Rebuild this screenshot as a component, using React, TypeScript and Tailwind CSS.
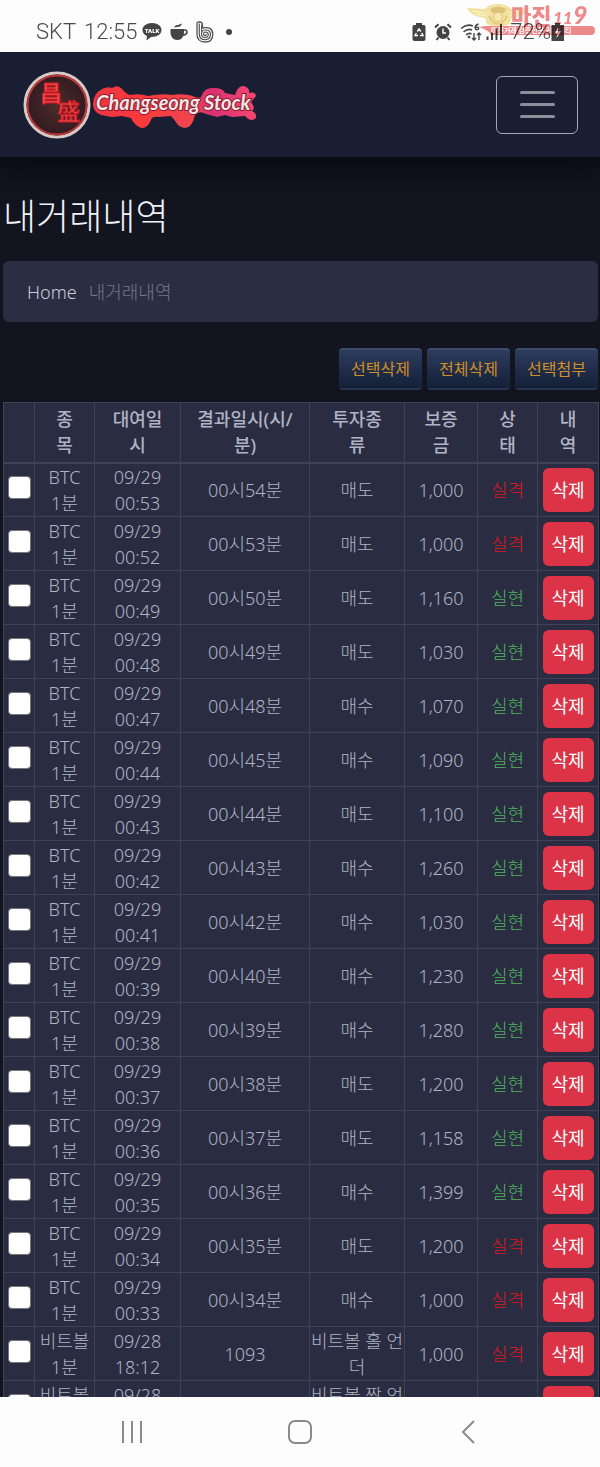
import React, { useState } from 'react';

type Trade = {
  item: string;
  date: string;
  time: string;
  result: string;
  kind: string;
  deposit: string;
  won: boolean;
};

const btc = (time: string, result: string, kind: string, deposit: string, won = true): Trade => ({
  item: 'BTC',
  date: '09/29',
  time,
  result,
  kind,
  deposit,
  won,
});

const trades: Trade[] = [
  btc('00:53', '00시54분', '매도', '1,000', false),
  btc('00:52', '00시53분', '매도', '1,000', false),
  btc('00:49', '00시50분', '매도', '1,160'),
  btc('00:48', '00시49분', '매도', '1,030'),
  btc('00:47', '00시48분', '매수', '1,070'),
  btc('00:44', '00시45분', '매수', '1,090'),
  btc('00:43', '00시44분', '매도', '1,100'),
  btc('00:42', '00시43분', '매수', '1,260'),
  btc('00:41', '00시42분', '매수', '1,030'),
  btc('00:39', '00시40분', '매수', '1,230'),
  btc('00:38', '00시39분', '매수', '1,280'),
  btc('00:37', '00시38분', '매도', '1,200'),
  btc('00:36', '00시37분', '매도', '1,158'),
  btc('00:35', '00시36분', '매수', '1,399'),
  btc('00:34', '00시35분', '매도', '1,200', false),
  btc('00:33', '00시34분', '매수', '1,000', false),
  { item: '비트볼', date: '09/28', time: '18:12', result: '1093', kind: '비트볼 홀 언더', deposit: '1,000', won: false },
  { item: '비트볼', date: '09/28', time: '18:11', result: '1092', kind: '비트볼 짝 언더', deposit: '1,000', won: false },
];

const headings = ['종목', '대여일시', '결과일시(시/분)', '투자종류', '보증금', '상태', '내역'];

function Watermark() {
  return (
    <svg className="absolute right-[5px] top-1 opacity-70 mix-blend-multiply" width="130" height="32" viewBox="0 0 130 32" aria-hidden="true">
      <path d="M2 4 L20 5 Q24 0 33 0 Q42 0 46 5 L64 4 Q61 12 46 14 L45 20 Q33 25 22 20 L20 14 Q5 12 2 4Z" fill="#efd977" />
      <path d="M7 7 L22 9 M11 10 L22 12 M59 7 L44 9 M55 10 L44 12" stroke="#fff3b8" strokeWidth="1" />
      <path d="M25 5 Q33 0 41 5 L39 9 H27Z" fill="#d1ad42" />
      <path d="M24 12 Q28 20 33 20 Q38 20 42 12" fill="none" stroke="#d1ad42" strokeWidth="1.500" />
      <circle cx="33" cy="13" r="4.500" fill="#f7e18a" stroke="#d1ad42" />
      <path d="M21 22 H126 Q130 22 130 26.500 Q130 31 126 31 H26 Q24 26 14 23Z" fill="#e8575b" />
      <text x="46" y="20" fontSize="22" fontWeight="900" fill="#e8575b" className="font-['Noto_Sans_CJK_KR',sans-serif]">마진</text>
      <text x="88" y="20" fontSize="17" fontWeight="900" fontStyle="italic" fill="#e8575b" className="font-['Lato',sans-serif]">11</text>
      <text x="108" y="20" fontSize="25" fontWeight="900" fontStyle="italic" fill="#e8575b" className="font-['Lato',sans-serif]">9</text>
      <text x="26" y="29" fontSize="7" fontWeight="700" fill="#fff" className="font-['Noto_Sans_CJK_KR',sans-serif]">마진거래 검증전문 커뮤니티</text>
    </svg>
  );
}

function StatusBar() {
  return (
    <div className="relative z-10 flex h-[52px] shrink-0 items-center bg-[#fdfdfd] pl-9 pr-9 pt-3 font-['Roboto',sans-serif] text-[22px] text-[#4a4a4a]">
      <span>SKT</span>
      <span className="ml-2">12:55</span>
      <svg className="ml-1" width="20" height="20" viewBox="0 0 20 20" aria-hidden="true">
        <path d="M10 1 C4.500 1 0.500 4 0.500 8 C0.500 10.700 2.200 12.800 5 14 L4.400 18.500 L9 15 C15 15.200 19.500 12.200 19.500 8 C19.500 4 15.500 1 10 1Z" fill="#444" />
        <text x="10" y="10.500" fontSize="6" fontWeight="900" textAnchor="middle" fill="#fff">TALK</text>
      </svg>
      <svg className="ml-2" width="18" height="18" viewBox="0 0 18 18" fill="#444" aria-hidden="true">
        <path d="M0.500 6 H14 V9 C14 13.500 11.500 17 7.300 17 C3 17 0.500 13.500 0.500 9Z" />
        <path d="M13 7 H15.500 Q17.300 7.500 17 9.500 Q16.500 12 12 12.300" fill="none" stroke="#444" strokeWidth="1.500" />
        <path d="M4 4.500 Q5 1.500 8 2 L12 0.500 Q11 4 7 4Z" />
      </svg>
      <svg className="ml-2" width="18" height="22" viewBox="0 0 18 22" fill="none" stroke="#555" aria-hidden="true">
        <path d="M1 2.500 Q1 1 2.500 1 H3.500 Q6.500 1 6.500 4 V7 Q16.800 5 16.800 13.500 Q16.800 21 9 21 Q1 21 1 13Z" strokeWidth="1.300" />
        <path d="M3.300 2.500 V13 Q3.300 18.700 9 18.700 Q14.500 18.500 14.500 13.500 Q14.500 8.800 9 9 Q5.500 9 5.500 13 Q5.500 16.500 9 16.500 Q12.300 16.500 12.300 13.500 Q12.300 11 9 11 Q7.500 11.200 7.500 13.300 Q7.700 14.600 9 14.600 Q10.500 14.500 10.300 13" strokeWidth="1.200" />
        <path d="M5.500 3.500 V12" strokeWidth="1" />
      </svg>
      <span className="ml-3 size-1.5 rounded-full bg-[#444]" />
      <span className="flex-1" />
      <svg width="14" height="18" viewBox="0 0 14 18" aria-hidden="true">
        <path d="M4 0 H10 V2 H12 Q13.500 2 13.500 4 V16 Q13.500 18 11.500 18 H2.500 Q0.500 18 0.500 16 V4 Q0.500 2 2 2 H4Z" fill="#444" />
        <path d="M5.300 8.500 L7 6 L8.800 8.500 M10 10 L11 12.500 H8 M6 12.500 H3 L4.300 10" fill="none" stroke="#fff" strokeWidth="1.400" />
      </svg>
      <svg className="ml-2" width="18" height="18" viewBox="0 0 18 18" aria-hidden="true">
        <circle cx="9" cy="9.500" r="6.500" fill="#444" />
        <path d="M1 4.500 L4.500 1.200 M17 4.500 L13.500 1.200 M4.500 14.500 L2.500 17 M13.500 14.500 L15.500 17" stroke="#444" strokeWidth="2" />
        <path d="M9 5.500 V10 H12" fill="none" stroke="#fff" strokeWidth="1.400" />
      </svg>
      <svg className="ml-2" width="22" height="18" viewBox="0 0 22 18" fill="none" stroke="#444" aria-hidden="true">
        <path d="M1 5.500 Q7 0.500 13 3 M3.500 9 Q8 5 12 7 M6 12 Q9 9.500 11.500 11" strokeWidth="1.600" />
        <circle cx="9" cy="14" r="1" fill="#444" />
        <path d="M18.500 1 Q15 2 15 4.800 Q15.200 6.800 17 6.800 Q18.700 6.500 18.700 5 Q18 3.500 15.500 4.500" strokeWidth="1.400" />
        <path d="M14 10 V17 M12 15 L14 17 L16 15 M19 17 V10 M17 12 L19 10 L21 12" strokeWidth="1.400" />
      </svg>
      <svg className="ml-1" width="16" height="16" viewBox="0 0 16 16" stroke="#444" strokeWidth="2" aria-hidden="true">
        <path d="M1.500 12.500 V16 M6 8.500 V16 M10.500 4.500 V16 M15 0 V16" />
      </svg>
      <span className="ml-2">72%</span>
      <svg width="13" height="18" viewBox="0 0 13 18" aria-hidden="true">
        <path d="M4 0 H9 V2 H13 V18 H0.500 V2 H4Z" fill="#444" />
        <path d="M7.500 4 L3.500 10.500 H6.500 L5.500 15 L10 8.500 H7Z" fill="#fff" />
      </svg>
      <Watermark />
    </div>
  );
}

function Logo() {
  return (
    <svg width="236" height="70" viewBox="0 0 236 70" role="img" aria-label="Changseong Stock">
      <defs>
        <linearGradient id="glow" x1="0" x2="1">
          <stop offset="0" stopColor="#ee3440" />
          <stop offset="0.300" stopColor="#f93a3c" />
          <stop offset="0.620" stopColor="#f0454f" />
          <stop offset="0.720" stopColor="#d93074" />
          <stop offset="1" stopColor="#f5476f" />
        </linearGradient>
        <radialGradient id="disc">
          <stop offset="0" stopColor="#4d2a2c" />
          <stop offset="1" stopColor="#301b20" />
        </radialGradient>
      </defs>
      <circle cx="35" cy="35" r="32" fill="url(#disc)" stroke="#d8c8c6" strokeWidth="3" />
      <circle cx="35" cy="35" r="29.500" fill="none" stroke="#b8383a" strokeWidth="2" />
      <g className="font-['Noto_Sans_CJK_SC',sans-serif]" fill="#fb4a4c" stroke="#c01822" strokeWidth="1">
        <text x="18" y="31" fontSize="22" fontWeight="700">昌</text>
        <text x="35" y="50" fontSize="23" fontWeight="500">盛</text>
      </g>
      <path
        d="M71 34 Q71 24 80 19 Q86 16 90 18 Q96 14 100 19 Q104 24 108 25 Q118 23 126 26 Q142 23 150 25 Q164 23 173 27 Q179 29 180 25 Q183 17 192 18 Q201 18 203 23 L213 25 Q216 15 222 16 Q228 18 227 23 Q233 21 234 26 L229 32 Q234 38 230 41 Q235 43 234 48 Q229 53 223 46 L210 47 L203 45 L195 47 L184 44 Q177 40 173 45 Q170 58 163 58 Q156 57 154 52 L149 46 L137 47 Q130 46 129 50 Q125 59 119 58 Q112 55 109 48 L100 46 L90 47 L79 45 Q71 42 71 34Z"
        fill="url(#glow)"
      />
      <text
        x="74"
        y="40"
        fontSize="20"
        fontWeight="700"
        fontStyle="italic"
        fill="#f5e6e6"
        stroke="#8a1c2e"
        strokeWidth="2"
        paintOrder="stroke"
        className="font-['Lato',sans-serif]"
      >
        Changseong Stock
      </text>
    </svg>
  );
}

function Header() {
  return (
    <header className="relative flex h-[105px] shrink-0 items-center justify-between bg-[#1a1e33] pl-[22px] pr-[22px] shadow-[0_6px_28px_4px_#080a10]">
      <a href="#">
        <Logo />
      </a>
      <button
        type="button"
        aria-label="메뉴"
        className="flex h-[58px] w-[82px] flex-col items-center justify-center gap-[9px] rounded-md border border-[#a5a7b0]"
      >
        <span className="h-[3px] w-[35px] rounded-full bg-[#8c8f9a]" />
        <span className="h-[3px] w-[35px] rounded-full bg-[#8c8f9a]" />
        <span className="h-[3px] w-[35px] rounded-full bg-[#8c8f9a]" />
      </button>
    </header>
  );
}

function ActionButton({ children, onClick }: { children: React.ReactNode; onClick?: () => void }) {
  return (
    <button
      type="button"
      onClick={onClick}
      className="h-[42px] w-[83px] rounded-sm border-y-2 border-t-[#3a4a6b] border-b-[#26344f] bg-linear-to-b from-[#2e3c5e] to-[#142038] text-base font-normal text-[#d18f26]"
    >
      {children}
    </button>
  );
}

export default function App() {
  const [checked, setChecked] = useState<number[]>([]);

  const toggle = (i: number) => {
    setChecked((prev) => (prev.includes(i) ? prev.filter((n) => n !== i) : [...prev, i]));
  };

  return (
    <div className="flex h-screen flex-col overflow-hidden bg-[#12141f] font-['Noto_Sans','Noto_Sans_CJK_KR',sans-serif] text-lg font-light text-[#b0b4c4]">
      <StatusBar />
      <Header />

      <main className="min-h-0 flex-1 overflow-hidden pl-[3px] pr-[2px] pt-8">
        <h1 className="text-4xl leading-[56px] text-[#f0f2f8]">내거래내역</h1>

        <nav className="mt-4 flex h-[61px] items-center gap-3 rounded-md bg-[#2b2e42] px-6">
          <a href="#" className="text-[#c9ccd8]">Home</a>
          <span className="text-[#74788a]">내거래내역</span>
        </nav>

        <div className="mt-[26px] flex justify-end gap-[5px]">
          <ActionButton>선택삭제</ActionButton>
          <ActionButton onClick={() => setChecked([])}>전체삭제</ActionButton>
          <ActionButton>선택첨부</ActionButton>
        </div>

        <table className="mt-3 w-full table-fixed border-collapse bg-[#2a2d42] text-center leading-[26px]">
          <colgroup>
            <col className="w-[31px]" />
            <col className="w-[60px]" />
            <col className="w-[86px]" />
            <col className="w-[129px]" />
            <col className="w-[95px]" />
            <col className="w-[73px]" />
            <col className="w-[60px]" />
            <col className="w-[61px]" />
          </colgroup>
          <thead>
            <tr className="h-[60px]">
              <th className="border border-b-2 border-[#3f435a]" />
              {headings.map((heading) => (
                <th key={heading} className="border border-b-2 border-[#3f435a] px-[15px] font-medium">
                  {heading}
                </th>
              ))}
            </tr>
          </thead>
          <tbody>
            {trades.map((trade, i) => (
              <tr key={i} className="h-[54px]">
                <td className="border border-[#3f435a] pb-1">
                  <input
                    type="checkbox"
                    aria-label={`${trade.item} ${trade.time}`}
                    checked={checked.includes(i)}
                    onChange={() => toggle(i)}
                    className="mx-auto block size-[23px] appearance-none rounded-sm border border-[#77777c] bg-white checked:bg-blue-500"
                  />
                </td>
                <td className="border border-[#3f435a]">{trade.item}<br />1분</td>
                <td className="border border-[#3f435a]">{trade.date}<br />{trade.time}</td>
                <td className="border border-[#3f435a]">{trade.result}</td>
                <td className="border border-[#3f435a]">{trade.kind}</td>
                <td className="border border-[#3f435a]">{trade.deposit}</td>
                <td className={trade.won ? 'border border-[#3f435a] text-[#4fb45c]' : 'border border-[#3f435a] text-[#e0141c]'}>
                  {trade.won ? '실현' : '실격'}
                </td>
                <td className="border border-[#3f435a]">
                  <button type="button" className="mx-auto block h-[44px] w-[51px] rounded-md bg-[#dc3446] font-normal text-white">
                    삭제
                  </button>
                </td>
              </tr>
            ))}
          </tbody>
        </table>
      </main>

      <footer className="flex h-[70px] shrink-0 items-center justify-center gap-[144px] bg-[#fdfdfd]">
        <button type="button" aria-label="최근 앱">
          <svg width="24" height="24" viewBox="0 0 24 24" stroke="#8b8b8b" strokeWidth="2">
            <path d="M3 1 V23 M12 1 V23 M21 1 V23" />
          </svg>
        </button>
        <button type="button" aria-label="홈">
          <svg width="24" height="24" viewBox="0 0 24 24" fill="none" stroke="#8b8b8b" strokeWidth="2">
            <rect x="1" y="1" width="22" height="22" rx="6" />
          </svg>
        </button>
        <button type="button" aria-label="뒤로">
          <svg width="24" height="24" viewBox="0 0 24 24" fill="none" stroke="#8b8b8b" strokeWidth="2">
            <path d="M18 1 L7 12 L18 23" />
          </svg>
        </button>
      </footer>
    </div>
  );
}
